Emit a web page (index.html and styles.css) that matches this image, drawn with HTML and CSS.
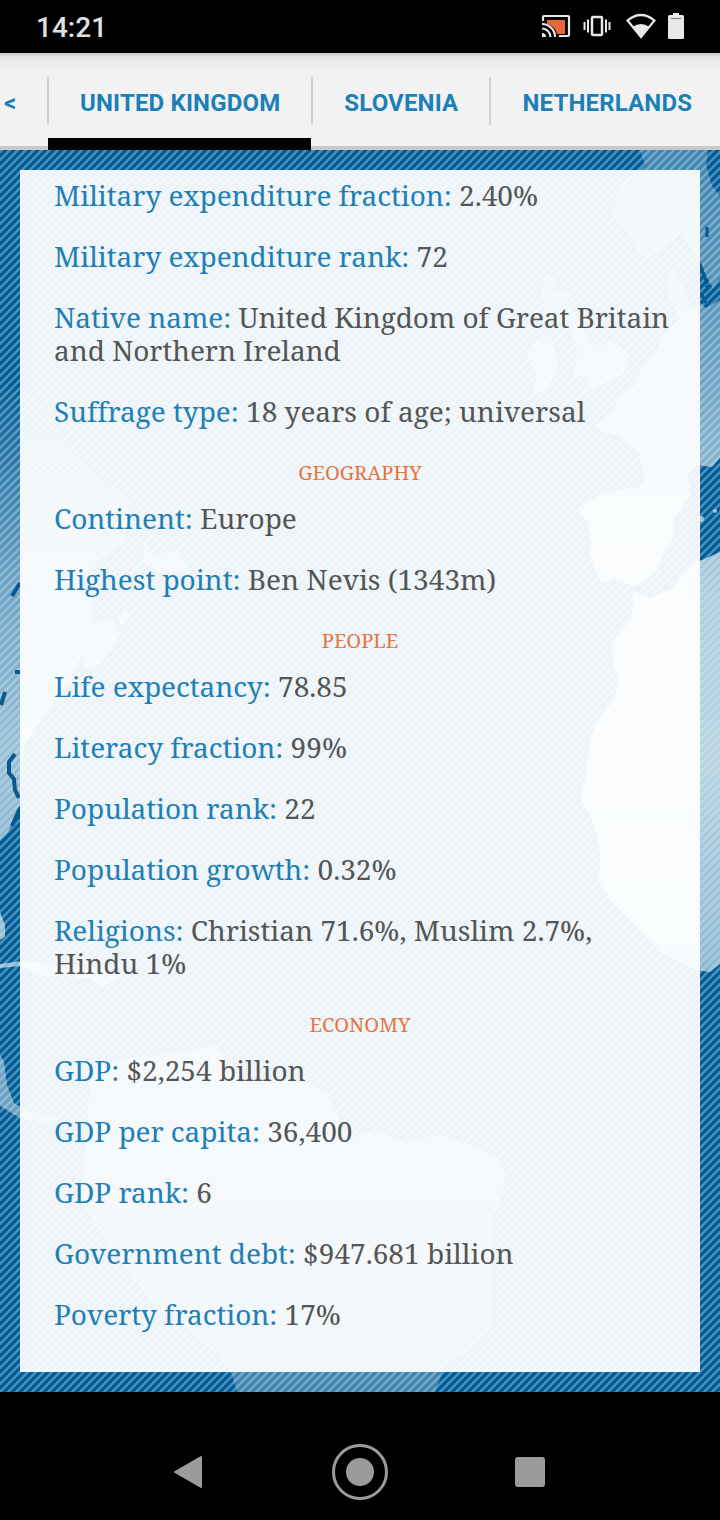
FILE: index.html
```html
<!DOCTYPE html>
<html lang="en">
<head>
    <meta charset="utf-8">
    <title>United Kingdom</title>
    <meta name="viewport" content="width=device-width, initial-scale=1">
    <link rel="stylesheet" href="styles.css">
</head>
<body>
    <header class="status">
        <span class="clock">14:21</span>
        <svg class="status-icons" width="150" height="30" viewBox="540 12 150 30">
            <!-- cast -->
            <path d="M547 20h18v14h-8c-1-5-5-9-10-10z" fill="#e8663a"/>
            <g fill="none" stroke="#e8e8e8" stroke-width="2.200">
                <path d="M543 21v-4q0-1 1-1h24q1 0 1 1v18q0 1-1 1h-9"/>
                <path d="M542 24a13 13 0 0 1 13 13M542 28.500a8.500 8.500 0 0 1 8.500 8.500"/>
            </g>
            <path d="M542 33a4 4 0 0 1 4 4h-4z" fill="#e8e8e8"/>
            <!-- vibrate -->
            <g fill="none" stroke="#e8e8e8" stroke-width="2">
                <rect x="592" y="17" width="10" height="18" rx="1" stroke-width="2.500"/>
                <path d="M588 19.500v13M584.500 22v8M606 19.500v13M609.500 22v8"/>
            </g>
            <!-- wifi -->
            <path d="M627.500 20.500q13.500-11 27 0L641 37z" fill="none" stroke="#e8e8e8" stroke-width="2.200"/>
            <path d="M632.500 27q8.500-6 17 0L641 38z" fill="#e8e8e8"/>
            <!-- battery -->
            <path d="M673 13h6v2h3.500q1.500 0 1.500 1.500v21q0 1.500-1.500 1.500h-13q-1.500 0-1.500-1.500v-21q0-1.500 1.500-1.500h3.500z" fill="#e8e8e8"/>
            <path d="M671 18.500h10" stroke="#777"/>
        </svg>
    </header>
    <nav class="tabs">
        <span class="tab tab-back">&lt;</span>
        <span class="tab tab-on">UNITED KINGDOM</span>
        <span class="tab">SLOVENIA</span>
        <span class="tab">NETHERLANDS</span>
    </nav>
    <main class="map">
        <svg class="map-bg" width="720" height="1242" viewBox="0 150 720 1242">
            <defs>
                <pattern id="stripes" width="8" height="8" patternUnits="userSpaceOnUse">
                    <rect width="8" height="8" fill="#07598f"/>
                    <path d="M-2 10L10-2M-2 2L2-2M6 10L10 6" stroke="#4593c4" stroke-width="2.400"/>
                </pattern>
                <linearGradient id="land" gradientUnits="userSpaceOnUse" x1="0" y1="150" x2="0" y2="1392">
                    <stop offset="0" stop-color="#d9eaf2" stop-opacity=".28"/>
                    <stop offset=".12" stop-color="#d9eaf2" stop-opacity=".4"/>
                    <stop offset=".25" stop-color="#d9eaf2" stop-opacity=".62"/>
                    <stop offset=".36" stop-color="#dcebf2" stop-opacity=".8"/>
                    <stop offset=".5" stop-color="#dcebf2" stop-opacity=".83"/>
                    <stop offset=".66" stop-color="#d9eaf2" stop-opacity=".65"/>
                    <stop offset=".75" stop-color="#d9eaf2" stop-opacity=".5"/>
                    <stop offset="1" stop-color="#d9eaf2" stop-opacity=".28"/>
                </linearGradient>
                <linearGradient id="west" gradientUnits="userSpaceOnUse" x1="0" y1="380" x2="0" y2="840">
                    <stop offset="0" stop-color="#d9eaf2" stop-opacity="0"/>
                    <stop offset=".45" stop-color="#d9eaf2" stop-opacity=".5"/>
                    <stop offset=".8" stop-color="#d9eaf2" stop-opacity=".7"/>
                    <stop offset="1" stop-color="#d9eaf2" stop-opacity=".65"/>
                </linearGradient>
            </defs>
            <rect y="150" width="720" height="1242" fill="url(#stripes)"/>
            <!-- Europe and Africa -->
            <g fill="url(#land)">
                <path d="M640 150L645 165L620 185L612 215L630 235L637 252L650 258L672 240L682 232L700 262L706 275L713 288L720 278V196L712 186L706 165L708 150z"/>
                <path d="M720 300L706 308L700 303L692 308L684 290L675 268L667 278L670 300L680 318L662 335L657 352L640 370L635 385L617 400L615 412L595 425L604 433L620 435L630 447L638 450L645 475L643 486L620 490L600 494L577 508L587 522L591 540L590 555L596 572L602 583L615 579L625 582L633 587L645 580L658 570L664 550L672 540L674 520L690 495L688 475L697 465L712 467L720 458z"/>
                <path d="M720 552L707 558L697 562L685 572L672 589L650 598L633 592L632 618L612 642L613 665L619 678L615 698L596 722L590 745L585 780L580 798L590 815L598 840L601 865L598 880L612 903L625 915L640 930L660 952L685 965L702 971L710 972L720 964z"/>
                <path d="M545 275L556 277L553 290L570 290L567 305L580 320L590 345L605 345L611 340L630 355L622 375L600 385L583 393L590 375L574 377L578 350L570 330L545 315L542 295z"/>
                <path d="M535 340L550 335L554 350L558 365L547 390L532 395L537 375L526 358z"/>
                <circle cx="701" cy="519" r="3"/>
                <circle cx="715" cy="511" r="2"/>
            </g>
            <path d="M707 227V237M700 264L707 284M701 293L706 303M707 285V291" stroke="#07598f" stroke-width="3" fill="none"/>
            <!-- North America -->
            <path d="M0 380L40 400L60 430L90 470L130 500L125 540L100 560L75 590L92 597L92 625L112 618L120 635L100 665L85 668L82 655L70 680L55 700L40 720L25 745L22 765L20 805L14 820L8 832L0 840z" fill="url(#west)"/>
            <path d="M143 540L155 555L178 550L190 570L160 573L143 562zM118 620L125 608L130 615L122 628z" fill="url(#west)"/>
            <path d="M12 596L20 583M15 672H20M1 705L5 692M15 754L9 762L9 773L14 779L15 790L19 798M20 808L12 826" stroke="#07598f" stroke-width="4" fill="none"/>
            <!-- Caribbean and South America -->
            <g fill="url(#land)">
                <path d="M0 912L5 925V937L0 940zM0 964L22 961L60 966L100 968L125 976L100 987L90 978L40 975L20 966L0 968z"/>
                <path d="M0 1055L4 1062L7 1085L14 1103L30 1112L60 1118L55 1125L20 1118L0 1106z"/>
                <path d="M90 1070L130 1058L180 1053L215 1045L240 1080L310 1083L328 1095L338 1115L338 1130L355 1138L375 1129L395 1138L405 1143L420 1137L445 1136L475 1147L495 1155L505 1172L503 1195L492 1220L490 1330L470 1350L445 1365L435 1392H237L232 1375L220 1355L150 1300L105 1240L80 1200L88 1130z"/>
            </g>
        </svg>
        <article class="card">
            <p><b>Military expenditure fraction:</b> 2.40%</p>
            <p><b>Military expenditure rank:</b> 72</p>
            <p class="long"><b>Native name:</b> United Kingdom of Great Britain<br>and Northern Ireland</p>
            <p><b>Suffrage type:</b> 18 years of age; universal</p>
            <h2>GEOGRAPHY</h2>
            <p><b>Continent:</b> Europe</p>
            <p><b>Highest point:</b> Ben Nevis (1343m)</p>
            <h2>PEOPLE</h2>
            <p><b>Life expectancy:</b> 78.85</p>
            <p><b>Literacy fraction:</b> 99%</p>
            <p><b>Population rank:</b> 22</p>
            <p><b>Population growth:</b> 0.32%</p>
            <p><b>Religions:</b> Christian 71.6%, Muslim 2.7%,<br>Hindu 1%</p>
            <h2>ECONOMY</h2>
            <p><b>GDP:</b> $2,254 billion</p>
            <p><b>GDP per capita:</b> 36,400</p>
            <p><b>GDP rank:</b> 6</p>
            <p><b>Government debt:</b> $947.681 billion</p>
            <p><b>Poverty fraction:</b> 17%</p>
        </article>
    </main>
    <footer class="navbar">
        <svg width="720" height="128" viewBox="0 1392 720 128" fill="#9b9b9b">
            <path d="M175 1472L201 1457V1487z" stroke="#9b9b9b" stroke-width="2" stroke-linejoin="round"/>
            <circle cx="360" cy="1472" r="26.500" fill="none" stroke="#9b9b9b" stroke-width="3"/>
            <circle cx="360" cy="1472" r="14"/>
            <rect x="515" y="1457" width="30" height="30" rx="3"/>
        </svg>
    </footer>
</body>
</html>
```
FILE: styles.css
```css
body {
    margin: 0;
    width: 720px;
    height: 1520px;
    overflow: hidden;
    background: #000;
}
svg {
    display: block;
}
.status {
    display: flex;
    justify-content: space-between;
    height: 53px;
    padding: 0 30px 0 36px;
    box-sizing: border-box;
    background: #000;
}
.clock {
    font: 500 28px/55px Roboto, sans-serif;
    color: #e0e0e0;
}
.status-icons {
    margin-top: 12px;
}
.tabs {
    display: flex;
    height: 97px;
    box-sizing: border-box;
    border-bottom: 4px solid #cacccc;
    background: linear-gradient(#c4c4c4, #e6e6e6 4px, #ececec 10px, #f2f2f2 17px);
}
.tab {
    flex: none;
    height: 48px;
    margin-top: 24px;
    padding: 0 31px 0 31px;
    border-left: 2px solid #d0d0d0;
    font: 700 24px/52px Roboto, sans-serif;
    letter-spacing: .16px;
    color: #1b7fb8;
    white-space: nowrap;
}
.tab-back {
    width: 42px;
    padding: 0 0 0 4px;
    border: 0;
    margin-right: 1px;
}
.tab-on {
    position: relative;
}
.tab-on::after {
    content: "";
    position: absolute;
    left: -1px;
    right: 0;
    top: 61px;
    height: 12px;
    background: #000;
    z-index: 1;
}
.map {
    position: relative;
    height: 1242px;
    padding: 20px;
    box-sizing: border-box;
}
.map-bg {
    position: absolute;
    left: 0;
    top: 0;
}
.card {
    position: relative;
    height: 1202px;
    padding: 9px 0 0 34px;
    box-sizing: border-box;
    background: rgba(255, 255, 255, .93);
    font: 28px/33px "Noto Serif", "DejaVu Serif Condensed", "DejaVu Serif", serif;
    color: #555;
}
.card p {
    margin: 0 0 28px;
    white-space: nowrap;
}
.card .long {
    letter-spacing: -.08px;
}
.card b {
    font-weight: normal;
    letter-spacing: -.04px;
    color: #2080b5;
}
.card h2 {
    margin: 0 34px 13px 0;
    font-size: 20px;
    font-weight: normal;
    text-align: center;
    color: #e57440;
}
```
